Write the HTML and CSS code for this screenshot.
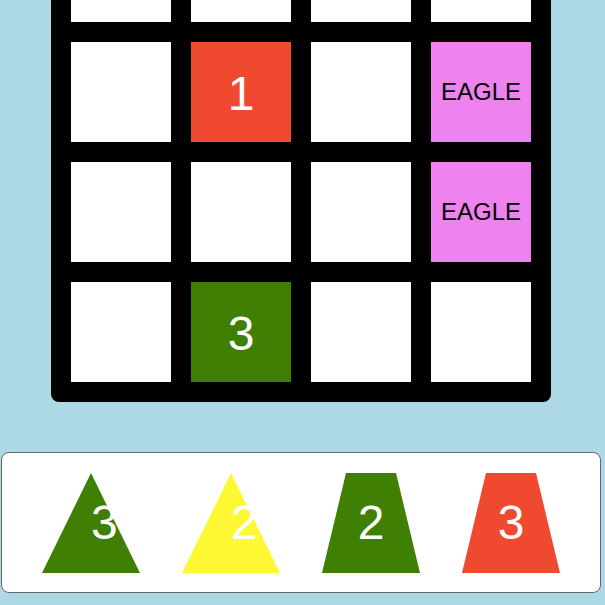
FILE: index.html
```html
<!DOCTYPE html>
<html>
<head>
<meta charset="utf-8">
<link rel="stylesheet" href="styles.css">
</head>
<body>
<div class="board">
  <div class="cell"></div><div class="cell"></div><div class="cell"></div><div class="cell"></div>
  <div class="cell"></div><div class="cell red">1</div><div class="cell"></div><div class="cell violet">EAGLE</div>
  <div class="cell"></div><div class="cell"></div><div class="cell"></div><div class="cell violet">EAGLE</div>
  <div class="cell"></div><div class="cell green">3</div><div class="cell"></div><div class="cell"></div>
</div>
<div class="tray">
  <div class="tri tri-green">3</div>
  <div class="tri tri-yellow">2</div>
  <div class="trap trap-green">2</div>
  <div class="trap trap-red">3</div>
</div>
</body>
</html>
```
FILE: styles.css
```css
html, body {
  margin: 0;
  padding: 0;
  background: #add8e6;
  font-family: "Liberation Sans", Arial, sans-serif;
  overflow: hidden;
}
.board {
  box-sizing: border-box;
  width: 500px;
  margin: -97.67px 0 0 51px;
  padding: 20px;
  background: #000;
  border-radius: 8px;
  display: grid;
  grid-template-columns: repeat(4, 100px);
  grid-auto-rows: 100px;
  gap: 20px;
}
.cell {
  background: #fff;
  display: flex;
  align-items: center;
  justify-content: center;
  color: #fff;
  font-size: 48px;
  padding-top: 3px;
  box-sizing: border-box;
}
.red { background: #ef4a2f; }
.green { background: #3e7f04; }
.violet {
  background: #ee82ee;
  color: #000;
  font-size: 24px;
  padding-top: 0;
}
.tray {
  box-sizing: border-box;
  width: 600px;
  height: 141px;
  margin: 49.33px 0 0 1px;
  padding: 20px 0;
  background: #fff;
  border: 1px solid #666;
  border-radius: 8px;
  display: flex;
  justify-content: center;
  gap: 42px;
}
.tri, .trap {
  height: 0;
  border-bottom: 100px solid;
  border-left: 49px solid transparent;
  border-right: 49px solid transparent;
  color: #fff;
  font-size: 48px;
  line-height: 100px;
  text-align: center;
  white-space: nowrap;
}
.tri { width: 0; }
.trap { width: 50px; border-left-width: 24px; border-right-width: 24px; }
.tri-green { border-bottom-color: #3e7f04; }
.tri-yellow { border-bottom-color: #fef834; }
.trap-green { border-bottom-color: #3e7f04; }
.trap-red { border-bottom-color: #ef4a2f; }
```
